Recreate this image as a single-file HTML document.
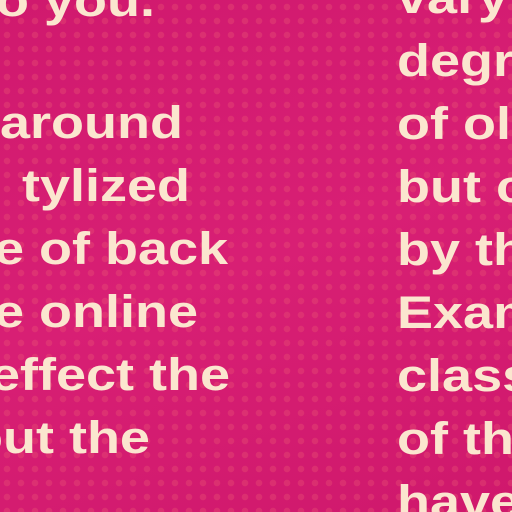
<!DOCTYPE html><html style="overflow:hidden"><head><style>
html,body{overflow:hidden}
body{margin:0;width:512px;height:512px;background:#d41b70;position:relative;
background-image:radial-gradient(circle,rgba(235,85,115,.35) 3px,transparent 3.5px),linear-gradient(160deg,#d0196e,#d81f74 50%,#cf186c);
background-size:14px 14px,100% 100%;font-family:"Liberation Sans",sans-serif}
.l{position:absolute;font-size:45px;font-weight:bold;color:#fbe6cf;white-space:nowrap;line-height:1;transform:scaleX(1.2);transform-origin:0 0}
</style></head><body>
<div class="l" style="left:-22px;top:-22px">to you.</div>
<div class="l" style="left:0px;top:100px">around</div>
<div class="l" style="left:22px;top:163px">tylized</div>
<div class="l" style="left:-6px;top:226px">e of back</div>
<div class="l" style="left:-6px;top:289px">e online</div>
<div class="l" style="left:-10px;top:352px">effect the</div>
<div class="l" style="left:-30px;top:415px">out the</div>
<div class="l" style="left:397px;top:-25px">vary</div>
<div class="l" style="left:397px;top:38px">degree</div>
<div class="l" style="left:397px;top:101px">of old</div>
<div class="l" style="left:397px;top:164px">but c</div>
<div class="l" style="left:397px;top:227px">by the</div>
<div class="l" style="left:397px;top:290px">Exam</div>
<div class="l" style="left:397px;top:353px">class</div>
<div class="l" style="left:397px;top:416px">of the</div>
<div class="l" style="left:397px;top:479px">have</div>
</body></html>
